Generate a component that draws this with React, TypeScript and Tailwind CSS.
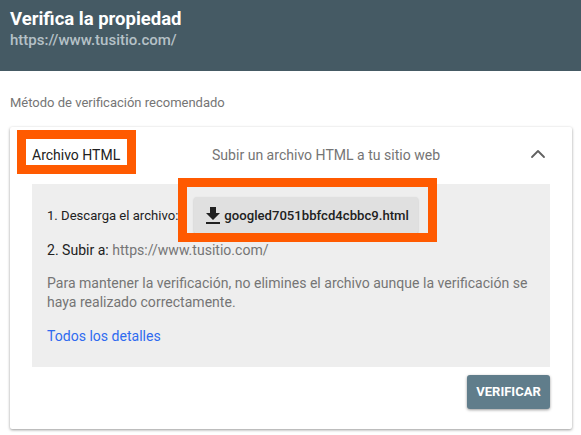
import React from 'react';
import { ChevronUp } from 'lucide-react';

const ROBOTO = "font-['Roboto',sans-serif]";

const DownloadIcon: React.FC = () => (
  <svg width="24" height="24" viewBox="0 0 24 24" className="fill-[#212121] shrink-0">
    <path d="M19 9h-4V3H9v6H5l7 7 7-7zM5 18v2h14v-2H5z" />
  </svg>
);

export default function App() {
  return (
    <div className={`${ROBOTO} relative w-[581px] h-[435px] bg-white overflow-hidden`}>
      {/* Header */}
      <div className="h-[71px] bg-[#455a64] pl-[10px] pt-[8px]">
        <h1 className="text-[18.5px] leading-[22px] font-bold text-white">Verifica la propiedad</h1>
        <p className="text-[15px] leading-[20px] font-medium text-[#b5c1c7]">https://www.tusitio.com/</p>
      </div>

      <p className="pl-[10px] pt-[24px] text-[13px] leading-[16px] text-[#757575]">Método de verificación recomendado</p>

      {/* Card */}
      <div className="ml-[10px] mt-[16px] w-[562px] h-[302px] bg-white rounded-[2px] shadow-[0_1px_3px_rgba(0,0,0,0.4)] px-[22px]">
        <div className="h-[57px] flex items-center">
          <span className="w-[148px] text-[14px] text-[#212121]">Archivo HTML</span>
          <span className="w-[300px] pl-[32px] text-[14.05px] text-[#757575] whitespace-nowrap">Subir un archivo HTML a tu sitio web</span>
          <ChevronUp size={24} strokeWidth={1.8} className="ml-[46px] -mt-[4px] text-[#616161]" />
        </div>

        <div className="h-[183px] bg-[#eeeeee] pl-[15px] pr-[20px]">
          <div className="flex items-center pt-[13px] pb-[6px]">
            <span className="text-[13.1px] text-[#212121]">1. Descarga el archivo:</span>
            <button className="ml-[16px] h-[37px] w-[224px] flex items-center pl-[7px] bg-[#e0e0e0] rounded-[3px] shadow-[0_1px_2px_rgba(0,0,0,0.25)] text-[13.15px] font-medium text-[#212121]">
              <DownloadIcon />
              <span className="-ml-[1px]">googled7051bbfcd4cbbc9.html</span>
            </button>
          </div>
          <p className="text-[14.05px] leading-[20px] text-[#757575]">
            <span className="text-[#212121]">2. Subir a:</span> https://www.tusitio.com/
          </p>
          <p className="mt-[14px] text-[14.05px] leading-[19px] text-[#757575]">
            Para mantener la verificación, no elimines el archivo aunque la verificación se haya realizado correctamente.
          </p>
          <a className="block mt-[14px] text-[14.05px] leading-[20px] text-[#2f6bf0]">Todos los detalles</a>
        </div>

        <div className="flex justify-end pt-[8px]">
          <button className="w-[83px] h-[34px] rounded-[3px] bg-[#607d8b] text-white text-[13px] font-bold shadow-[0_1px_3px_rgba(0,0,0,0.4)]">VERIFICAR</button>
        </div>
      </div>

      {/* Highlight annotations */}
      <div className="absolute left-[17px] top-[130px] w-[119px] h-[44px] border-[9px] border-[#ff5a00]" />
      <div className="absolute left-[178px] top-[178px] w-[259px] h-[64px] border-[9px] border-[#ff5a00]" />
    </div>
  );
}
